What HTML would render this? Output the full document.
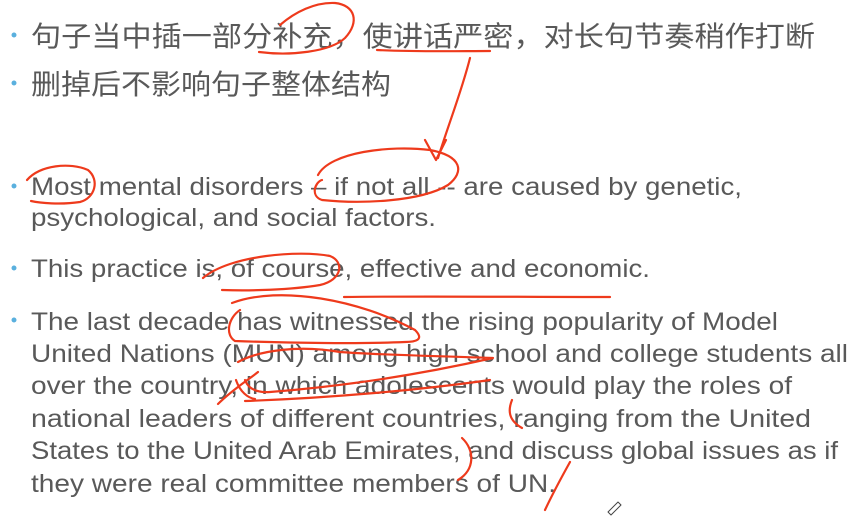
<!DOCTYPE html>
<html><head><meta charset="utf-8"><style>
html,body{margin:0;padding:0;background:#fff;}
svg{display:block}
text{fill:#595959;font-family:"Liberation Sans","Noto Sans CJK SC",sans-serif;}
.e{font-size:25px}
.c{font-size:28px;font-family:"Noto Sans CJK SC","WenQuanYi Zen Hei",sans-serif}
.r{fill:none;stroke:#ee3a1c;stroke-width:2.2;stroke-linecap:round;stroke-linejoin:round}
</style></head><body>
<svg width="859" height="532" viewBox="0 0 859 532" xmlns="http://www.w3.org/2000/svg">
<g fill="#5ab0de">
<circle cx="14" cy="35" r="2.5"/><circle cx="14" cy="83" r="2.5"/>
<circle cx="14" cy="186" r="2.5"/><circle cx="14" cy="268" r="2.5"/><circle cx="14" cy="320" r="2.5"/>
</g>
<text class="c" x="31" y="46" textLength="784" lengthAdjust="spacingAndGlyphs">句子当中插一部分补充，使讲话严密，对长句节奏稍作打断</text>
<text class="c" x="31" y="94" textLength="360" lengthAdjust="spacingAndGlyphs">删掉后不影响句子整体结构</text>
<text class="e" x="31" y="195" textLength="711" lengthAdjust="spacingAndGlyphs">Most mental disorders – if not all -- are caused by genetic,</text>
<text class="e" x="31" y="226" textLength="405" lengthAdjust="spacingAndGlyphs">psychological, and social factors.</text>
<text class="e" x="31" y="277" textLength="619" lengthAdjust="spacingAndGlyphs">This practice is, of course, effective and economic.</text>
<text class="e" x="31" y="330" textLength="747" lengthAdjust="spacingAndGlyphs">The last decade has witnessed the rising popularity of Model</text>
<text class="e" x="31" y="362" textLength="817" lengthAdjust="spacingAndGlyphs">United Nations (MUN) among high school and college students all</text>
<text class="e" x="31" y="394" textLength="761" lengthAdjust="spacingAndGlyphs">over the country, in which adolescents would play the roles of</text>
<text class="e" x="31" y="427" textLength="780" lengthAdjust="spacingAndGlyphs">national leaders of different countries, ranging from the United</text>
<text class="e" x="31" y="459" textLength="807" lengthAdjust="spacingAndGlyphs">States to the United Arab Emirates, and discuss global issues as if</text>
<text class="e" x="31" y="492" textLength="525" lengthAdjust="spacingAndGlyphs">they were real committee members of UN.</text>
<g class="r">
<path d="M259 52 C290 56 330 52 345 38 C360 22 355 5 335 3 C315 2 295 12 280 25"/>
<path d="M377 50 C420 52 460 51 490 51"/>
<path d="M470 58 C462 90 450 120 438 158 M425 140 L436 160 L446 140"/>
<path d="M27 180 C40 165 70 162 88 170 C100 180 95 198 80 202 C60 205 40 203 31 201"/>
<path d="M318 175 C330 152 390 145 430 150 C462 156 465 172 448 185 C420 202 360 204 322 200 C310 196 315 182 322 180"/>
<path d="M203 278 C230 255 300 250 330 256 C345 262 342 280 320 285 C290 290 250 291 222 290"/>
<path d="M344 297 C420 296 520 297 610 297"/>
<path d="M232 303 C280 285 360 300 415 330 C425 340 415 342 405 342 C360 344 290 343 235 341 C225 335 228 318 240 310"/>
<path d="M238 362 C260 350 300 345 340 352 C380 355 440 356 493 358 C440 370 360 385 270 392 C255 393 248 388 245 380"/>
<path d="M218 404 C232 390 248 380 258 372 M236 380 C240 392 248 398 255 399"/>
<path d="M245 401 C330 398 420 390 490 380"/>
<path d="M512 400 C508 410 508 420 522 428"/>
<path d="M462 438 C475 450 475 470 458 480"/>
<path d="M570 462 C560 480 552 495 545 510"/>
<path d="M608 512 L618 502 L621 505 L611 515 Z" style="stroke:#444;stroke-width:1"/>
</g>
</svg>
</body></html>
